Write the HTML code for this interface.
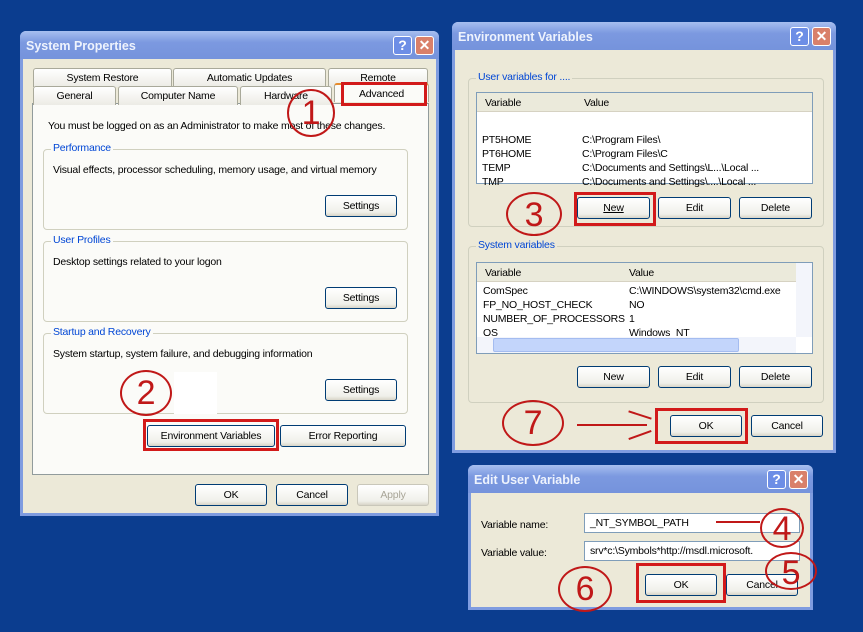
<!DOCTYPE html><html><head><style>
*{box-sizing:border-box;margin:0;padding:0}
body{width:863px;height:632px;background:#0b3d8f;font-family:"Liberation Sans",sans-serif;font-size:10.5px;letter-spacing:-0.2px;color:#000;position:relative;overflow:hidden}
.a{position:absolute}
.win{position:absolute;background:#ece9d8;border:3px solid #7f9ce0;border-top:none;border-radius:6px 6px 0 0}
.tb{position:absolute;left:-3px;right:-3px;top:0;height:28px;background:linear-gradient(#a7bff0,#7c99e0 40%,#7593dc);border-radius:6px 6px 0 0;color:#eef3fd;font-weight:bold;font-size:12.5px;letter-spacing:0;padding:8px 0 0 6px}
.tbtn{position:absolute;top:5px;width:19px;height:19px;border:1px solid #fff;border-radius:3px;color:#fff;font-weight:bold;font-size:14px;text-align:center;line-height:17px}
.q{background:#6d8ee6}.x{background:#d9806a}
.btn{position:absolute;height:22px;border:1px solid #003c74;border-radius:3px;background:linear-gradient(#fff,#f0f0ea 80%,#d8d4c8);text-align:center;line-height:20px}
.grp{position:absolute;border:1px solid #d0d0bf;border-radius:4px}
.gl{position:absolute;top:-8px;left:7px;background:#fbfbf8;color:#0046d5;padding:0 2px}
.red{position:absolute;border:3px solid #d21a1a}
.circ{position:absolute;border:2px solid #c01818;border-radius:50%;color:#c01818;font-size:34px;text-align:center;line-height:1}
.tab{position:absolute;height:19px;border:1px solid #a9a99a;border-bottom:none;border-radius:3px 3px 0 0;background:linear-gradient(#fff,#ecebe5);text-align:center;line-height:19px}
.list{position:absolute;background:#fff;border:1px solid #7f9db9}
.hd{position:absolute;left:0;right:0;top:0;height:19px;background:#ebeadb;border-bottom:1px solid #d6d2c2}
.r{position:absolute;white-space:nowrap}
</style></head><body>

<div class="win" style="left:20px;top:31px;width:419px;height:485px">
 <div class="tb">System Properties<div class="tbtn q" style="right:27px">?</div><div class="tbtn x" style="right:5px">✕</div></div>
 <div class="a" style="left:9px;top:72px;width:397px;height:372px;background:#fbfbf8;border:1px solid #919b9c"></div>
 <div class="tab" style="left:10px;top:37px;width:139px">System Restore</div>
 <div class="tab" style="left:150px;top:37px;width:153px">Automatic Updates</div>
 <div class="tab" style="left:305px;top:37px;width:100px">Remote</div>
 <div class="tab" style="left:10px;top:55px;width:83px">General</div>
 <div class="tab" style="left:95px;top:55px;width:120px">Computer Name</div>
 <div class="tab" style="left:217px;top:55px;width:92px">Hardware</div>
 <div class="tab" style="left:311px;top:52px;width:95px;background:#fbfbf8;border-top:2px solid #e68b2c">Advanced</div>
 <div class="r" style="left:25px;top:89px">You must be logged on as an Administrator to make most of these changes.</div>
 <div class="grp" style="left:20px;top:118px;width:365px;height:81px;background:#fbfbf8"><span class="gl">Performance</span>
  <div class="r" style="left:9px;top:14px">Visual effects, processor scheduling, memory usage, and virtual memory</div>
  <div class="btn" style="left:281px;top:45px;width:72px">Settings</div></div>
 <div class="grp" style="left:20px;top:210px;width:365px;height:81px;background:#fbfbf8"><span class="gl">User Profiles</span>
  <div class="r" style="left:9px;top:14px">Desktop settings related to your logon</div>
  <div class="btn" style="left:281px;top:45px;width:72px">Settings</div></div>
 <div class="grp" style="left:20px;top:302px;width:365px;height:81px;background:#fbfbf8"><span class="gl">Startup and Recovery</span>
  <div class="r" style="left:9px;top:14px">System startup, system failure, and debugging information</div>
  <div class="a" style="left:130px;top:38px;width:43px;height:42px;background:#fff"></div>
  <div class="btn" style="left:281px;top:45px;width:72px">Settings</div></div>
 <div class="btn" style="left:124px;top:394px;width:128px">Environment Variables</div>
 <div class="btn" style="left:257px;top:394px;width:126px">Error Reporting</div>
 <div class="btn" style="left:172px;top:453px;width:72px">OK</div>
 <div class="btn" style="left:253px;top:453px;width:72px">Cancel</div>
 <div class="btn" style="left:334px;top:453px;width:72px;color:#a8a597;border-color:#c9c7ba">Apply</div>
</div>
<div class="circ" style="left:287px;top:89px;width:48px;height:48px;padding-top:5px">1</div>
<div class="red" style="left:341px;top:82px;width:86px;height:24px"></div>
<div class="circ" style="left:120px;top:370px;width:52px;height:46px;padding-top:4px">2</div>
<div class="red" style="left:143px;top:419px;width:136px;height:32px"></div>

<div class="win" style="left:452px;top:22px;width:384px;height:431px">
 <div class="tb">Environment Variables<div class="tbtn q" style="right:27px">?</div><div class="tbtn x" style="right:5px">✕</div></div>
 <div class="grp" style="left:13px;top:56px;width:356px;height:149px"><span class="gl" style="background:#ece9d8">User variables for ....</span></div>
 <div class="list" style="left:21px;top:70px;width:337px;height:92px">
  <div class="hd"><span class="r" style="left:8px;top:4px">Variable</span><span class="r" style="left:107px;top:4px">Value</span></div>
  <div class="r" style="left:5px;top:40px;line-height:14px">PT5HOME<br>PT6HOME<br>TEMP<br>TMP</div>
  <div class="r" style="left:105px;top:40px;line-height:14px">C:\Program Files\<br>C:\Program Files\C<br>C:\Documents and Settings\L...\Local ...<br>C:\Documents and Settings\....\Local ...</div>
 </div>
 <div class="btn" style="left:122px;top:175px;width:73px;text-decoration:underline">New</div>
 <div class="btn" style="left:203px;top:175px;width:73px">Edit</div>
 <div class="btn" style="left:284px;top:175px;width:73px">Delete</div>
 <div class="grp" style="left:13px;top:224px;width:356px;height:157px"><span class="gl" style="background:#ece9d8">System variables</span></div>
 <div class="list" style="left:21px;top:240px;width:337px;height:92px">
  <div class="hd" style="right:16px"><span class="r" style="left:8px;top:4px">Variable</span><span class="r" style="left:152px;top:4px">Value</span></div>
  <div class="r" style="left:6px;top:21px;line-height:14px">ComSpec<br>FP_NO_HOST_CHECK<br>NUMBER_OF_PROCESSORS<br>OS</div>
  <div class="r" style="left:152px;top:21px;line-height:14px">C:\WINDOWS\system32\cmd.exe<br>NO<br>1<br>Windows_NT</div>
  <div class="a" style="right:0;top:0;width:16px;height:74px;background:#f3f5fb"></div>
  <div class="a" style="left:0;right:16px;top:74px;height:16px;background:#f3f5fb"><div class="a" style="left:16px;top:1px;width:246px;height:14px;background:#c3d5fb;border:1px solid #a4bcf0;border-radius:2px"></div></div>
 </div>
 <div class="btn" style="left:122px;top:344px;width:73px">New</div>
 <div class="btn" style="left:203px;top:344px;width:73px">Edit</div>
 <div class="btn" style="left:284px;top:344px;width:73px">Delete</div>
 <div class="btn" style="left:215px;top:393px;width:72px">OK</div>
 <div class="btn" style="left:296px;top:393px;width:72px">Cancel</div>
</div>
<div class="circ" style="left:506px;top:192px;width:56px;height:44px;padding-top:4px">3</div>
<div class="red" style="left:574px;top:192px;width:82px;height:34px"></div>
<div class="circ" style="left:502px;top:400px;width:62px;height:46px;padding-top:4px">7</div>
<div class="a" style="left:577px;top:424px;width:70px;height:2px;background:#c01818"></div>
<div class="a" style="left:628px;top:414px;width:24px;height:2px;background:#c01818;transform:rotate(18deg)"></div>
<div class="a" style="left:628px;top:434px;width:24px;height:2px;background:#c01818;transform:rotate(-20deg)"></div>
<div class="red" style="left:655px;top:408px;width:93px;height:36px"></div>

<div class="win" style="left:468px;top:465px;width:345px;height:145px">
 <div class="tb">Edit User Variable<div class="tbtn q" style="right:27px">?</div><div class="tbtn x" style="right:5px">✕</div></div>
 <div class="r" style="left:10px;top:54px">Variable name:</div>
 <div class="r" style="left:10px;top:82px">Variable value:</div>
 <div class="a" style="left:113px;top:48px;width:216px;height:20px;background:#fff;border:1px solid #7f9db9;padding:3px 5px">_NT_SYMBOL_PATH</div>
 <div class="a" style="left:113px;top:76px;width:216px;height:20px;background:#fff;border:1px solid #7f9db9;padding:3px 5px;overflow:hidden;white-space:nowrap">srv*c:\Symbols*http://msdl.microsoft.</div>
 <div class="btn" style="left:174px;top:109px;width:72px">OK</div>
 <div class="btn" style="left:255px;top:109px;width:72px">Cancel</div>
</div>
<div class="a" style="left:716px;top:521px;width:44px;height:2px;background:#c01818"></div>
<div class="circ" style="left:760px;top:508px;width:44px;height:40px;padding-top:2px">4</div>
<div class="circ" style="left:765px;top:552px;width:52px;height:38px;padding-top:2px">5</div>
<div class="circ" style="left:558px;top:566px;width:54px;height:46px;padding-top:4px">6</div>
<div class="red" style="left:636px;top:563px;width:90px;height:40px"></div>
</body></html>
